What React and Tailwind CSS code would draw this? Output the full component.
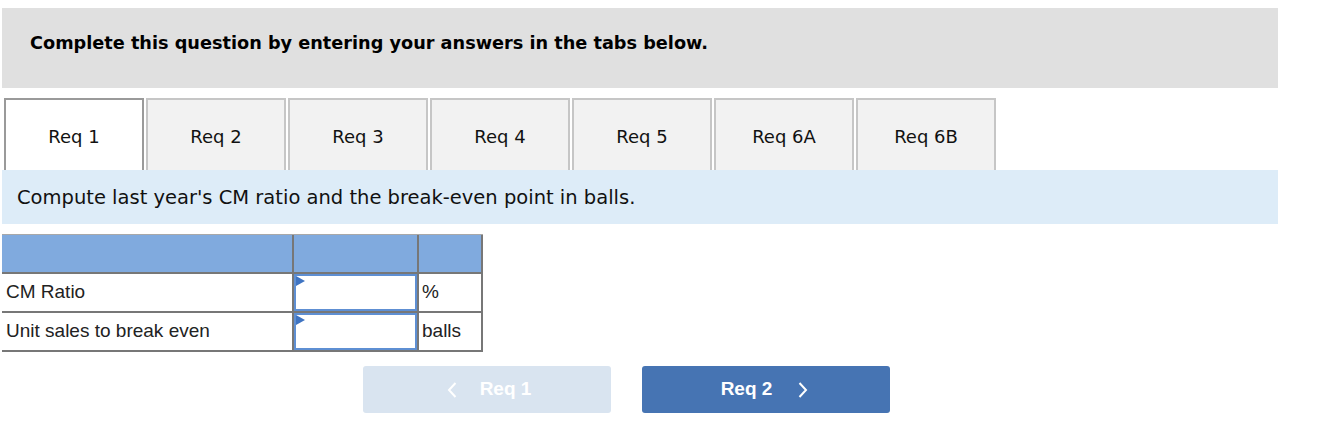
import React, { useState } from 'react';

const tabs = ['Req 1', 'Req 2', 'Req 3', 'Req 4', 'Req 5', 'Req 6A', 'Req 6B'];

const rows = [
  { label: 'CM Ratio', unit: '%' },
  { label: 'Unit sales to break even', unit: 'balls' },
];

const Chevron = ({ dir }) => (
  <svg width="10" height="16" viewBox="0 0 10 16" fill="none" stroke="currentColor" strokeWidth="2">
    {dir === 'left' ? <path d="M8.5 1 L2 8 L8.5 15" /> : <path d="M1.5 1 L8 8 L1.5 15" />}
  </svg>
);

const App = () => {
  const [active] = useState(0);
  const [values, setValues] = useState(['', '']);

  return (
    <div className="w-[1320px] h-[436px] bg-white pl-[2px] pt-[8px] text-[#111]" style={{ fontFamily: '"DejaVu Sans", Verdana, sans-serif' }}>
      {/* Instruction header */}
      <div className="w-[1276px] h-[80px] bg-[#e0e0e0] pl-[28px] pt-[24px]">
        <p className="text-[17.7px] leading-[22px] font-bold text-black">
          Complete this question by entering your answers in the tabs below.
        </p>
      </div>

      {/* Tabs */}
      <div className="flex gap-[2px] pl-[2px] mt-[10px] h-[72px]">
        {tabs.map((t, i) => (
          <div
            key={t}
            className={`w-[140px] h-[72px] flex items-center justify-center border-2 border-b-0 text-[18px] pt-[2px] ${
              i === active ? 'bg-white border-[#9a9a9a]' : 'bg-[#f2f2f2] border-[#c6c6c6]'
            }`}
          >
            {t}
          </div>
        ))}
      </div>

      {/* Prompt banner */}
      <div className="w-[1276px] h-[54px] bg-[#ddecf8] flex items-center pl-[15px] pt-[2px]">
        <p className="text-[19.5px] text-[#111]">Compute last year's CM ratio and the break-even point in balls.</p>
      </div>

      {/* Answer table */}
      <div className="mt-[10px] w-[481px] text-[19px] text-[#222]" style={{ fontFamily: '"Liberation Sans", Arial, sans-serif' }}>
        <div className="flex h-[40px] bg-[#80aade] border-t border-[#a8a8a8] border-b-2 border-b-[#777]">
          <div className="w-[292px] border-r-2 border-[#777]" />
          <div className="w-[125px] border-r-2 border-[#777]" />
          <div className="w-[64px] border-r-2 border-[#777]" />
        </div>
        {rows.map((r, i) => (
          <div key={r.label} className="flex h-[39px] border-b-2 border-[#777]">
            <div className="w-[292px] border-r-2 border-[#777] flex items-center pl-[4px]">{r.label}</div>
            <div className="w-[125px] border-r-2 border-[#777] relative">
              <input
                value={values[i]}
                onChange={(e) => setValues(values.map((v, j) => (j === i ? e.target.value : v)))}
                className="w-full h-full border-2 border-[#5e8fd3] bg-white outline-none px-[4px] text-right"
              />
              <svg className="absolute left-[2px] top-[2px]" width="9" height="10" viewBox="0 0 9 10">
                <path d="M0 0 L9 5 L0 10 Z" fill="#3f74c2" />
              </svg>
            </div>
            <div className="w-[64px] border-r-2 border-[#777] flex items-center pl-[3px]">{r.unit}</div>
          </div>
        ))}
      </div>

      {/* Navigation buttons */}
      <div className="flex gap-[31px] ml-[361px] mt-[14px]" style={{ fontFamily: '"Liberation Sans", Arial, sans-serif' }}>
        <button className="w-[248px] h-[47px] rounded-[3px] bg-[#d9e4f0] text-white font-bold text-[19px] flex items-center justify-center gap-[23px] pl-[4px]">
          <Chevron dir="left" />
          <span>Req 1</span>
        </button>
        <button className="w-[248px] h-[47px] rounded-[3px] bg-[#4674b3] text-white font-bold text-[19px] flex items-center justify-center gap-[26px] pr-[3px]">
          <span>Req 2</span>
          <Chevron dir="right" />
        </button>
      </div>
    </div>
  );
};

export default App;
